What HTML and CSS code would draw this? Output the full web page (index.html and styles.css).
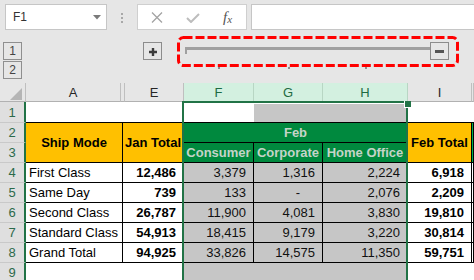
FILE: index.html
```html
<!DOCTYPE html>
<html>
<head>
<meta charset="utf-8">
<link rel="stylesheet" href="styles.css">
</head>
<body>
<div class="app">
  <div class="fbar">
    <div class="namebox">
      <span class="nb-text">F1</span>
      <svg class="nb-arrow" width="8" height="5" viewBox="0 0 8 5"><polygon points="0,0 8,0 4,4.5" fill="#7a7a7a"/></svg>
    </div>
    <div class="grip"><i></i><i></i><i></i></div>
    <div class="fxbox">
      <svg class="ic-x" width="12" height="11" viewBox="0 0 12 11"><path d="M1 0.5 L11 10.5 M11 0.5 L1 10.5" stroke="#a3a3a3" stroke-width="1.3" fill="none"/></svg>
      <svg class="ic-ok" width="14" height="10" viewBox="0 0 14 10"><polyline points="1,5 5,9 13,1" stroke="#bdbdbd" stroke-width="2" fill="none"/></svg>
      <span class="fx">f<span class="fx-x">x</span></span>
    </div>
    <div class="finput"></div>
  </div>

  <div class="outline">
    <div class="lvl lvl1">1</div>
    <div class="lvl lvl2">2</div>
    <div class="obtn plus"><svg width="8" height="8" viewBox="0 0 8 8"><path d="M4 0 V8 M0 4 H8" stroke="#3c3c3c" stroke-width="2.4"/></svg></div>
    <div class="group">
      <div class="gline"></div>
      <div class="obtn minus"><svg width="9" height="3" viewBox="0 0 9 3"><rect width="9" height="3" fill="#555"/></svg></div>
    </div>
    <div class="dot d-f"></div>
    <div class="dot d-g"></div>
    <div class="dot d-h"></div>
    <svg class="callout" width="282" height="31" viewBox="0 0 282 31"><rect x="1.5" y="1.5" width="279" height="28" rx="5" ry="5" fill="none" stroke="#ff0000" stroke-width="3" stroke-dasharray="9 3"/></svg>
  </div>

  <div class="sheet">
    <div class="colhdr">
      <div class="ch corner"><svg width="12" height="12" viewBox="0 0 12 12"><polygon points="12,0 12,12 0,12" fill="#b5b5b5"/></svg></div>
      <div class="ch">A</div>
      <div class="ch"></div>
      <div class="ch">E</div>
      <div class="ch sel">F</div>
      <div class="ch sel">G</div>
      <div class="ch sel">H</div>
      <div class="ch">I</div>
      <div class="ch"></div>
    </div>

    <div class="grid">
      <!-- row 1 -->
      <div class="rh">1</div>
      <div class="c tb"></div>
      <div class="c tb"></div>
      <div class="c tb"></div>
      <div class="c tb sg r1g"></div>
      <div class="c tb sg r1g"></div>
      <div class="c tb"></div>
      <div class="c tb"></div>
      <!-- rows 2-3 -->
      <div class="rh">2</div>
      <div class="c t org rows2">Ship Mode</div>
      <div class="c t org rows2">Jan Total</div>
      <div class="c t grn cols3">Feb</div>
      <div class="c t org rows2">Feb Total</div>
      <div class="c t grn2 rows2"></div>
      <div class="rh">3</div>
      <div class="c t grn">Consumer</div>
      <div class="c t grn">Corporate</div>
      <div class="c t grn">Home Office</div>
      <!-- row 4 -->
      <div class="rh">4</div>
      <div class="c t lbl">First Class</div>
      <div class="c t num b">12,486</div>
      <div class="c t num sg">3,379</div>
      <div class="c t num sg">1,316</div>
      <div class="c t num sg">2,224</div>
      <div class="c t num b">6,918</div>
      <div class="c t"></div>
      <!-- row 5 -->
      <div class="rh">5</div>
      <div class="c t lbl">Same Day</div>
      <div class="c t num b">739</div>
      <div class="c t num sg">133</div>
      <div class="c t num sg dash">-</div>
      <div class="c t num sg">2,076</div>
      <div class="c t num b">2,209</div>
      <div class="c t"></div>
      <!-- row 6 -->
      <div class="rh">6</div>
      <div class="c t lbl">Second Class</div>
      <div class="c t num b">26,787</div>
      <div class="c t num sg">11,900</div>
      <div class="c t num sg">4,081</div>
      <div class="c t num sg">3,830</div>
      <div class="c t num b">19,810</div>
      <div class="c t"></div>
      <!-- row 7 -->
      <div class="rh">7</div>
      <div class="c t lbl">Standard Class</div>
      <div class="c t num b">54,913</div>
      <div class="c t num sg">18,415</div>
      <div class="c t num sg">9,179</div>
      <div class="c t num sg">3,220</div>
      <div class="c t num b">30,814</div>
      <div class="c t"></div>
      <!-- row 8 -->
      <div class="rh">8</div>
      <div class="c t lbl">Grand Total</div>
      <div class="c t num b">94,925</div>
      <div class="c t num sg">33,826</div>
      <div class="c t num sg">14,575</div>
      <div class="c t num sg">11,350</div>
      <div class="c t num b">59,751</div>
      <div class="c t"></div>
      <!-- row 9 -->
      <div class="rh rh-last">9</div>
      <div class="c"></div>
      <div class="c"></div>
      <div class="c sg cols3"></div>
      <div class="c"></div>
      <div class="c"></div>
    </div>

    <div class="selection"></div>
    <div class="fill-handle"></div>
  </div>
</div>
</body>
</html>
```

FILE: styles.css
```css
* { box-sizing: border-box; margin: 0; padding: 0; }
html, body { width: 474px; height: 280px; overflow: hidden; }
body {
  background: #e6e6e6;
  font-family: "Liberation Sans", Arial, sans-serif;
  color: #000;
}
.app { width: 474px; }

/* formula bar */
.fbar {
  display: flex;
  align-items: flex-start;
  height: 33px;
  padding-top: 4px;
  padding-left: 5px;
}
.namebox {
  width: 102px;
  height: 26px;
  background: #fff;
  border: 1px solid #c6c6c6;
  display: flex;
  align-items: center;
  justify-content: space-between;
  padding-left: 7px;
  padding-right: 5px;
}
.nb-text { font-size: 12px; color: #333; }
.grip {
  display: flex;
  flex-direction: column;
  gap: 2px;
  margin-left: 14px;
  margin-top: 9px;
}
.grip i { display: block; width: 2px; height: 2px; background: #a8a8a8; }
.fxbox {
  width: 110px;
  height: 26px;
  margin-left: 14px;
  background: #fff;
  border: 1px solid #cfcfcf;
  display: flex;
  align-items: center;
}
.ic-x { margin-left: 13px; }
.ic-ok { margin-left: 23px; margin-top: 1px; }
.fx {
  margin-left: 23px;
  font-family: "Liberation Serif", serif;
  font-style: italic;
  font-size: 15px;
  color: #555;
  line-height: 1;
}
.fx-x { font-size: 11px; position: relative; top: 1px; }
.finput {
  flex: 1;
  height: 26px;
  margin-left: 4px;
  background: #fff;
  border: 1px solid #c6c6c6;
  border-right: none;
}

/* outline bar */
.outline {
  position: relative;
  height: 50px;
  padding-top: 9px;
  display: grid;
  grid-template-columns: 26px 97px 61px 70px 69px 85px 64px 1fr;
  grid-template-rows: 19px 19px;
}
.lvl {
  width: 19px;
  height: 18px;
  margin-left: 3px;
  border: 1px solid #8f8f8f;
  font-size: 12px;
  color: #444;
  display: flex;
  align-items: center;
  justify-content: center;
}
.lvl1 { grid-column: 1; grid-row: 1; }
.lvl2 { grid-column: 1; grid-row: 2; }
.obtn {
  width: 19px;
  height: 18px;
  border: 1px solid #8c8c8c;
  display: flex;
  align-items: center;
  justify-content: center;
}
.plus { grid-column: 3; grid-row: 1; margin-left: 20px; padding-top: 1px; }
.group {
  grid-column: 4 / 8;
  grid-row: 1;
  display: flex;
  align-items: flex-start;
  padding-left: 1px;
  padding-right: 23px;
}
.gline {
  flex: 1;
  height: 7px;
  margin-top: 5px;
  border-top: 3px solid #a0a0a0;
  border-left: 2px solid #a0a0a0;
}
.minus { padding-top: 1px; }
.dot {
  grid-row: 2;
  width: 2px;
  height: 2px;
  background: #8e8e8e;
  justify-self: center;
  margin-top: 6px;
}
.d-f { grid-column: 4; }
.d-g { grid-column: 5; }
.d-h { grid-column: 6; }
.callout {
  position: absolute;
  left: 177px;
  top: 3px;
}

/* sheet */
.sheet { position: relative; }
.colhdr {
  display: grid;
  grid-template-columns: 26px 95px 4px 59px 70px 69px 85px 64px 1fr;
  height: 19px;
}
.ch {
  border-right: 1px solid #bfbfbf;
  border-bottom: 1px solid #b1b1b1;
  display: flex;
  align-items: center;
  justify-content: center;
  font-size: 13px;
  color: #262626;
}
.ch.corner {
  justify-content: flex-end;
  align-items: flex-end;
  padding-right: 3px;
  padding-bottom: 1px;
}
.ch.sel {
  background: #d3f0e0;
  color: #1e6b42;
  border-right-color: #b8d6c4;
  border-bottom-color: #217346;
}

.grid {
  display: grid;
  grid-template-columns: 26px 97px 61px 70px 69px 85px 64px 1fr;
  grid-template-rows: 21px repeat(7, 20px) 17px;
  background: #fff;
}
.rh {
  background: #dfdfdf;
  border-right: 2px solid #217346;
  border-bottom: 1px solid #c9c9c9;
  color: #2b6a4a;
  font-size: 13px;
  display: flex;
  align-items: center;
  justify-content: center;
}
.rh-last { border-bottom: none; align-items: flex-start; padding-top: 2px; }
.c {
  display: flex;
  align-items: center;
  font-size: 13px;
  white-space: nowrap;
  overflow: hidden;
  background: #fff;
}
.t { border-right: 1px solid #000; border-bottom: 1px solid #000; }
.tb { border-bottom: 1px solid #000; }
.rows2 { grid-row: span 2; }
.cols3 { grid-column: span 3; }
.org { background: #ffc000; font-weight: bold; justify-content: center; }
.grn { background: #00893e; color: #c4d4c8; font-weight: bold; justify-content: center; }
.grn2 { background: #00b050; }
.sg { background: #c6c6c6; color: #111; }
.r1g { border-top: 2px solid #fff; }
.num { justify-content: flex-end; padding-right: 7px; }
.dash { padding-right: 22px; }
.b { font-weight: bold; }
.lbl { padding-left: 3px; }

.selection {
  position: absolute;
  left: 182px;
  top: 18px;
  width: 226px;
  height: 179px;
  border: 2px solid #217346;
  border-bottom: none;
  pointer-events: none;
}
.fill-handle {
  position: absolute;
  left: 404px;
  top: 18px;
  width: 7px;
  height: 7px;
  background: #217346;
  border-left: 1px solid #fff;
  border-bottom: 1px solid #fff;
}
```
